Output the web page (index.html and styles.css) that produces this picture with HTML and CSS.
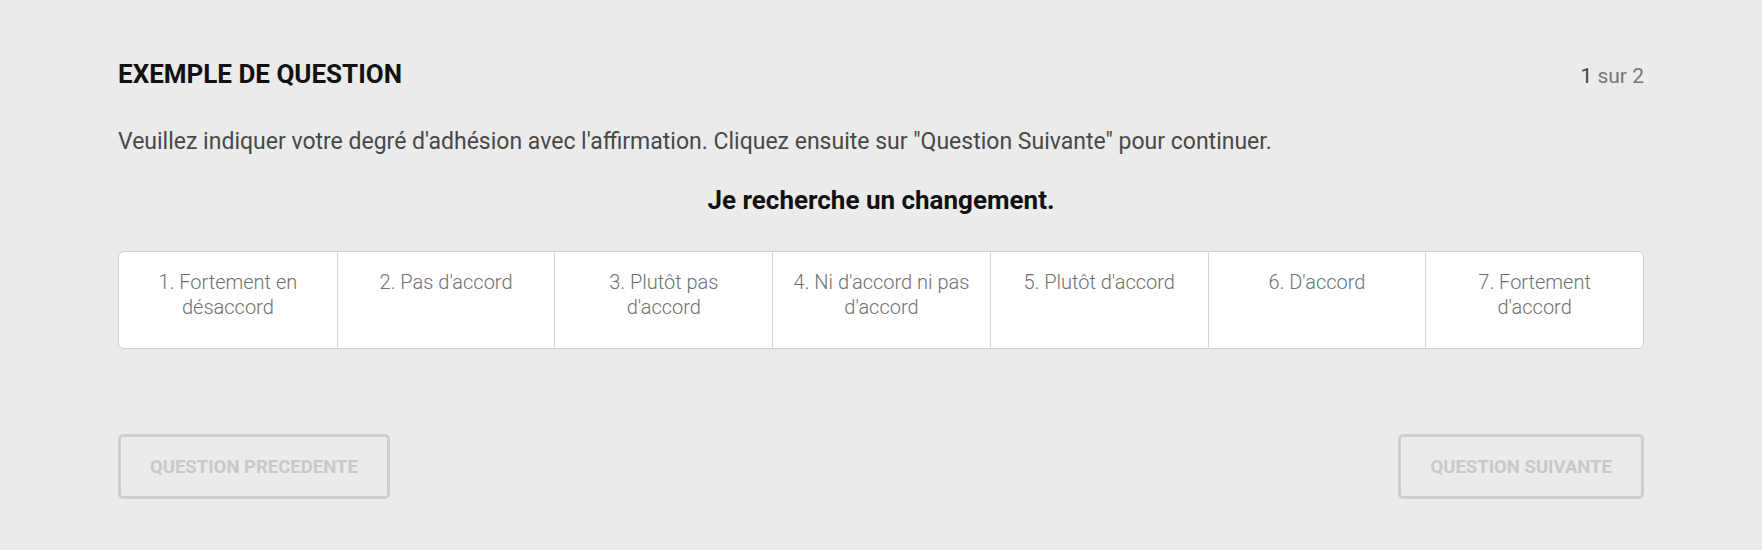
FILE: index.html
```html
<!DOCTYPE html>
<html lang="fr">
<head>
  <meta charset="UTF-8" />
  <meta name="viewport" content="width=device-width, initial-scale=1.0"/>
  <title>Exemple de question</title>
  <link rel="stylesheet" href="styles.css">
</head>
<body>
  <div class="survey">
    <div class="survey-head">
      <h1 class="survey-title">EXEMPLE DE QUESTION</h1>
      <div class="survey-count"><span class="count-current">1</span> sur 2</div>
    </div>

    <p class="survey-help">Veuillez indiquer votre degré d'adhésion avec l'affirmation. Cliquez ensuite sur "Question Suivante" pour continuer.</p>

    <h2 class="survey-statement">Je recherche un changement.</h2>

    <div class="scale">
      <div class="scale-item">1. Fortement en désaccord</div>
      <div class="scale-item">2. Pas d'accord</div>
      <div class="scale-item">3. Plutôt pas d'accord</div>
      <div class="scale-item">4. Ni d'accord ni pas d'accord</div>
      <div class="scale-item">5. Plutôt d'accord</div>
      <div class="scale-item">6. D'accord</div>
      <div class="scale-item">7. Fortement d'accord</div>
    </div>

    <div class="survey-nav">
      <button class="nav-btn" disabled>QUESTION PRECEDENTE</button>
      <button class="nav-btn" disabled>QUESTION SUIVANTE</button>
    </div>
  </div>
</body>
</html>
```

FILE: styles.css
```css
body {
  margin: 0;
  background: #ebebeb;
  font-family: Roboto, "Noto Sans", sans-serif;
  color: #111;
}
.survey {
  padding: 59px 118px 40px;
}
.survey-head {
  display: flex;
  justify-content: space-between;
  align-items: baseline;
}
.survey-title {
  margin: 0;
  font-size: 26px;
  line-height: 30px;
  font-weight: 700;
  color: #111;
}
.survey-count {
  font-size: 21px;
  color: #777;
}
.count-current {
  color: #444;
}
.survey-help {
  margin: 39px 0 0;
  font-size: 23px;
  line-height: 28px;
  color: #484848;
}
.survey-statement {
  margin: 29px 0 0;
  text-align: center;
  font-size: 26px;
  line-height: 30px;
  font-weight: 700;
  color: #111;
}
.scale {
  display: grid;
  grid-template-columns: repeat(7, 1fr);
  margin-top: 36px;
  background: #fff;
  border: 1px solid #cfcfcf;
  border-radius: 6px;
  overflow: hidden;
}
.scale-item {
  height: 96px;
  box-sizing: border-box;
  padding: 18px 18px 0;
  text-align: center;
  font-size: 20px;
  line-height: 25px;
  font-weight: 300;
  color: #6f6f6f;
  border-left: 1px solid #d6d6d6;
  cursor: pointer;
}
.scale-item:first-child {
  border-left: none;
}
.survey-nav {
  display: flex;
  justify-content: space-between;
  margin-top: 85px;
}
.nav-btn {
  height: 65px;
  box-sizing: border-box;
  padding: 0 29px;
  background: transparent;
  border: 3px solid #cecece;
  border-radius: 5px;
  font-family: Roboto, "Noto Sans", sans-serif;
  font-size: 18.5px;
  font-weight: 700;
  color: #c8c8c8;
}
```
